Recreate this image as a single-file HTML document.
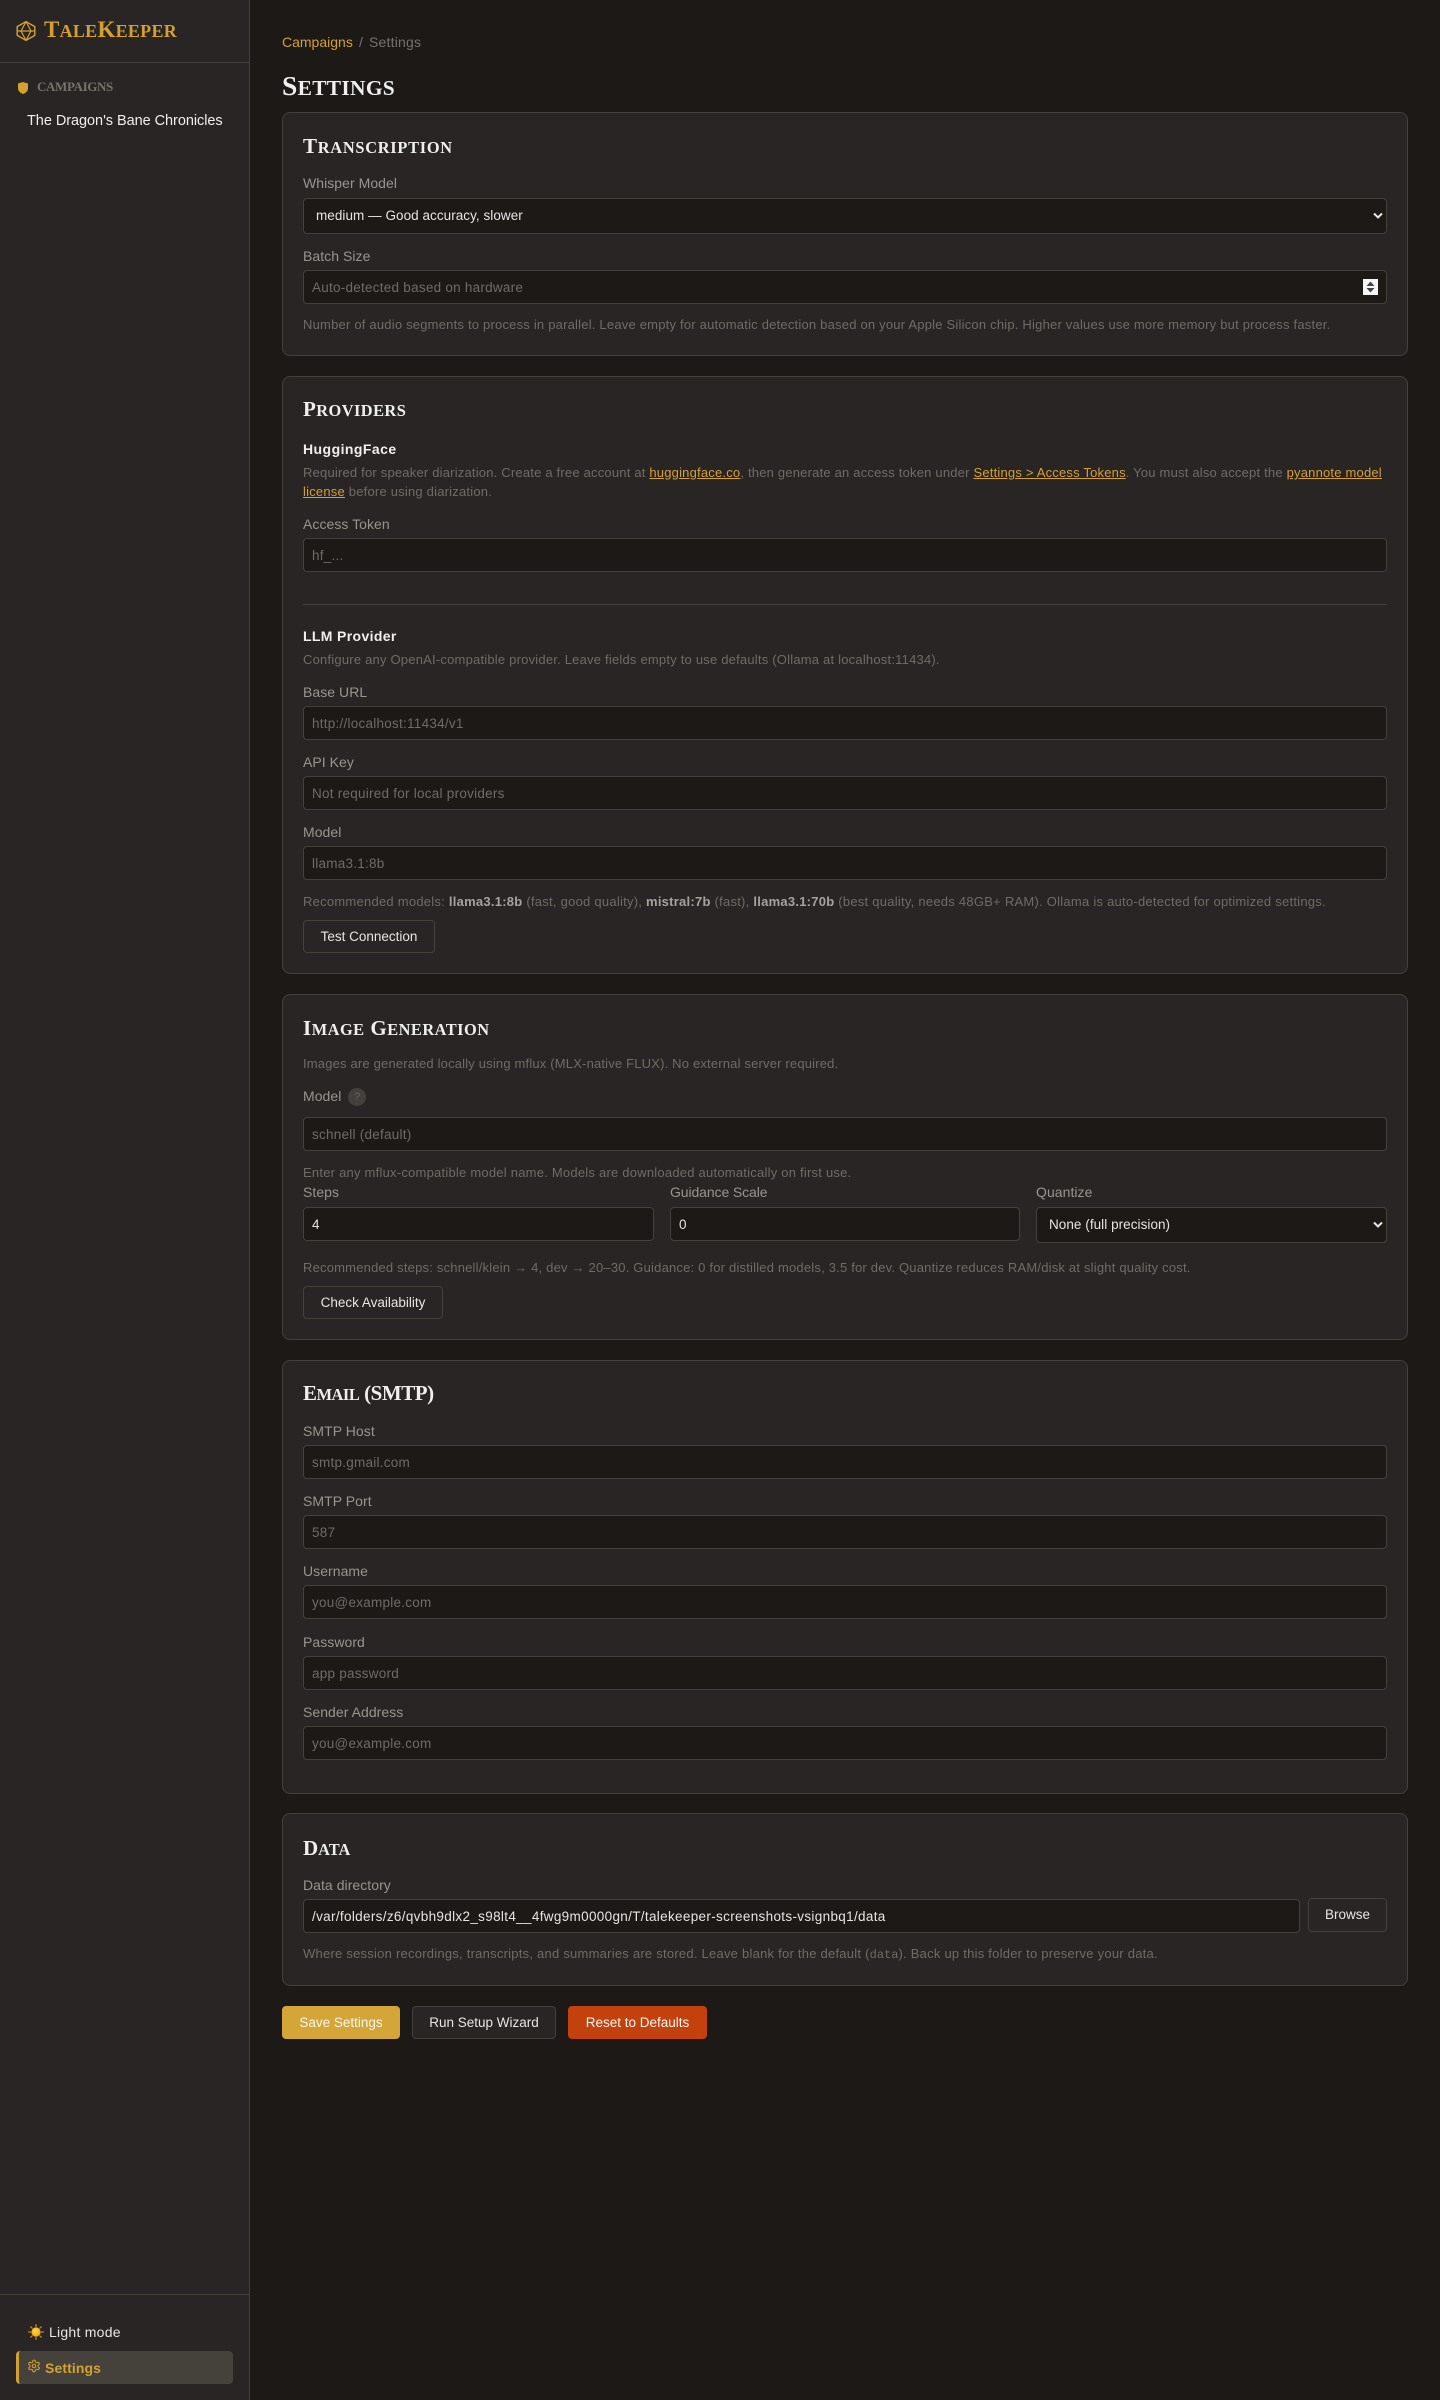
<!DOCTYPE html>
<html lang="en"><head><meta charset="utf-8"><title>TaleKeeper Settings</title>
<style>
*{box-sizing:border-box}
html,body{margin:0;padding:0;background:#1c1917}
body{width:1440px;height:2400px;position:relative;overflow:hidden;font-family:"Liberation Sans",sans-serif;color:#e7e5e4}
.a{position:absolute}
.t{position:absolute;white-space:nowrap;line-height:20px;height:20px}
.side{left:0;top:0;width:250px;height:2400px;background:#292524;border-right:1px solid #44403c}
.card{position:absolute;left:282px;width:1126px;background:#292524;border:1px solid #44403c;border-radius:8px}
.sc{font-family:"Liberation Serif",serif;font-weight:700;line-height:30px;height:30px}
.sc span{font-size:.78em;text-transform:uppercase}
.h{left:303px;font-size:21px;letter-spacing:.73px;color:#f0efee;top:0}
.l{left:303px;font-size:14px;letter-spacing:.05px;color:#9a948e}
.n{left:303px;font-size:13px;letter-spacing:.21px;color:#716b66}
.b{left:303px;font-size:14px;font-weight:700;letter-spacing:.35px;color:#f0efee}
.i{position:absolute;left:303px;width:1084px;height:34px;background:#1c1917;border:1px solid #44403c;border-radius:4px;font-size:13.5px;letter-spacing:.25px;line-height:33px;padding-left:8px;color:#716b66;white-space:nowrap;overflow:hidden}
.v{color:#e7e5e4}
.s{padding-left:12px;height:36px;line-height:34px;font-size:13.5px;letter-spacing:.05px;color:#e7e5e4}
.btn{position:absolute;height:33px;border:1px solid #44403c;border-radius:4px;background:#292524;color:#e7e5e4;font-size:13.5px;line-height:31px;text-align:center;white-space:nowrap;letter-spacing:0}
a{color:#d4a030;text-decoration:underline}
.n b{color:#a8a29e}
code{font-family:"Liberation Mono",monospace;font-size:12px;letter-spacing:0}
svg{position:absolute;display:block}
</style></head><body>

<div class="a side"></div>
<div class="a" style="left:0;top:62px;width:249px;height:1px;background:#44403c"></div>
<div class="a" style="left:0;top:2294px;width:249px;height:1px;background:#44403c"></div>

<svg style="left:15px;top:20px" width="22" height="22" viewBox="0 0 20 20" fill="none" stroke="#d4a030" stroke-width="1.3" stroke-linejoin="round"><path d="M10 1.500 18 6v8l-8 4.500L2 14V6z"/><path d="M10 1.500 14.500 10 10 18.500 5.500 10z" stroke-width="1.100"/><path d="M2 10h16" stroke-width="1.100"/></svg>
<div class="t sc" style="left:44px;top:15px;font-size:23px;letter-spacing:.3px;color:#d4a030">T<span>ale</span>K<span>eeper</span></div>

<svg style="left:18px;top:82px" width="10" height="12" viewBox="0 0 10 12"><path d="M5 0 10 1.500V6c0 3-2.200 5-5 6C2.200 11 0 9 0 6V1.500z" fill="#d4a030"/></svg>
<div class="t sc" style="left:37px;top:72px;font-size:15px;letter-spacing:-.4px;color:#78716c"><span style="font-size:.87em">campaigns</span></div>
<div class="t" style="left:27px;top:111px;font-size:14.500px;letter-spacing:-.05px;color:#f0efee">The Dragon's Bane Chronicles</div>

<svg style="left:28px;top:2324px" width="16" height="16" viewBox="0 0 16 16"><defs><radialGradient id="g" cx=".45" cy=".4" r=".7"><stop offset="0" stop-color="#ffd83a"/><stop offset="1" stop-color="#f59a0b"/></radialGradient></defs><g stroke="#b8862a" stroke-width="1.300" stroke-linecap="round"><path d="M8 .6v2M8 13.400v2M.6 8h2M13.400 8h2M2.800 2.800l1.300 1.300M11.900 11.900l1.300 1.300M2.800 13.200l1.300-1.300M11.900 4.100l1.300-1.300"/></g><circle cx="8" cy="8" r="4.600" fill="url(#g)"/></svg>
<div class="t" style="left:49px;top:2322px;font-size:14px;letter-spacing:.25px;color:#e7e5e4">Light mode</div>
<div class="a" style="left:16px;top:2351px;width:217px;height:33px;background:#45423c;border-left:3px solid #d4a030;border-radius:4px"></div>
<svg style="left:27px;top:2359px" width="14" height="14" viewBox="0 0 24 24" fill="none" stroke="#d4a030" stroke-width="1.800" stroke-linecap="round" stroke-linejoin="round"><path d="M12.220 2h-.44a2 2 0 0 0-2 2v.18a2 2 0 0 1-1 1.730l-.43.25a2 2 0 0 1-2 0l-.15-.08a2 2 0 0 0-2.730.73l-.22.38a2 2 0 0 0 .73 2.730l.15.1a2 2 0 0 1 1 1.720v.51a2 2 0 0 1-1 1.740l-.15.09a2 2 0 0 0-.73 2.730l.22.38a2 2 0 0 0 2.730.73l.15-.08a2 2 0 0 1 2 0l.43.25a2 2 0 0 1 1 1.730V20a2 2 0 0 0 2 2h.44a2 2 0 0 0 2-2v-.18a2 2 0 0 1 1-1.730l.43-.25a2 2 0 0 1 2 0l.15.08a2 2 0 0 0 2.730-.73l.22-.39a2 2 0 0 0-.73-2.730l-.15-.08a2 2 0 0 1-1-1.740v-.5a2 2 0 0 1 1-1.740l.15-.09a2 2 0 0 0 .73-2.730l-.22-.38a2 2 0 0 0-2.730-.73l-.15.08a2 2 0 0 1-2 0l-.43-.25a2 2 0 0 1-1-1.730V4a2 2 0 0 0-2-2z"/><circle cx="12" cy="12" r="3"/></svg>
<div class="t" style="left:45px;top:2358px;font-size:14px;font-weight:700;letter-spacing:.1px;color:#d4a030">Settings</div>

<div class="t" style="left:282px;top:32px;font-size:14px;letter-spacing:0;color:#d4a030">Campaigns</div>
<div class="t" style="left:359px;top:32px;font-size:14px;color:#78716c">/</div>
<div class="t" style="left:369px;top:32px;font-size:14px;letter-spacing:.2px;color:#78716c">Settings</div>
<div class="t sc" style="left:282px;top:71px;font-size:27.500px;letter-spacing:.3px;color:#f0efee">S<span>ettings</span></div>

<div class="card" style="top:112px;height:244px"></div>
<div class="card" style="top:376px;height:598px"></div>
<div class="card" style="top:994px;height:346px"></div>
<div class="card" style="top:1360px;height:434px"></div>
<div class="card" style="top:1813px;height:173px"></div>

<div class="t sc h" style="top:131px">T<span>ranscription</span></div>
<div class="t l" style="top:173px">Whisper Model</div>
<div class="i s" style="top:198px">medium — Good accuracy, slower</div>
<svg style="left:1373px;top:212px" width="10" height="8" viewBox="0 0 10 8" fill="none" stroke="#e7e5e4" stroke-width="2"><path d="M1 1.500l4 4 4-4"/></svg>
<div class="t l" style="top:246px">Batch Size</div>
<div class="i" style="top:270px">Auto-detected based on hardware</div>
<svg style="left:1363px;top:279px" width="15" height="16" viewBox="0 0 15 16"><rect width="15" height="16" fill="#f5f5f5"/><path d="M7.500 2.500 11.500 7h-8zM7.500 13.500 3.500 9h8z" fill="#444"/></svg>
<div class="t n" style="top:315px">Number of audio segments to process in parallel. Leave empty for automatic detection based on your Apple Silicon chip. Higher values use more memory but process faster.</div>

<div class="t sc h" style="top:394px;letter-spacing:.45px">P<span>roviders</span></div>
<div class="t b" style="top:439px;letter-spacing:.45px">HuggingFace</div>
<div class="t n" style="top:463px;letter-spacing:.2px">Required for speaker diarization. Create a free account at <a>huggingface.co</a>, then generate an access token under <a>Settings &gt; Access Tokens</a>. You must also accept the <a>pyannote model</a></div>
<div class="t n" style="top:482px"><a>license</a> before using diarization.</div>
<div class="t l" style="top:514px">Access Token</div>
<div class="i" style="top:538px">hf_...</div>
<div class="a" style="left:303px;top:604px;width:1084px;height:1px;background:#44403c"></div>
<div class="t b" style="top:626px">LLM Provider</div>
<div class="t n" style="top:650px">Configure any OpenAI-compatible provider. Leave fields empty to use defaults (Ollama at localhost:11434).</div>
<div class="t l" style="top:682px">Base URL</div>
<div class="i" style="top:706px">http://localhost:11434/v1</div>
<div class="t l" style="top:752px">API Key</div>
<div class="i" style="top:776px">Not required for local providers</div>
<div class="t l" style="top:822px">Model</div>
<div class="i" style="top:846px">llama3.1:8b</div>
<div class="t n" style="top:892px;letter-spacing:.25px">Recommended models: <b>llama3.1:8b</b> (fast, good quality), <b>mistral:7b</b> (fast), <b>llama3.1:70b</b> (best quality, needs 48GB+ RAM). Ollama is auto-detected for optimized settings.</div>
<div class="btn" style="left:303px;top:920px;width:132px">Test Connection</div>

<div class="t sc h" style="top:1013px;letter-spacing:.5px">I<span>mage</span> G<span>eneration</span></div>
<div class="t n" style="top:1054px;letter-spacing:.18px">Images are generated locally using mflux (MLX-native FLUX). No external server required.</div>
<div class="t l" style="top:1086px">Model</div>
<div class="a" style="left:348px;top:1088px;width:18px;height:18px;border-radius:50%;background:#44403c;color:#6b6560;font-size:11px;line-height:18px;text-align:center">?</div>
<div class="i" style="top:1117px">schnell (default)</div>
<div class="t n" style="top:1163px;letter-spacing:.23px">Enter any mflux-compatible model name. Models are downloaded automatically on first use.</div>
<div class="t l" style="top:1182px">Steps</div>
<div class="t l" style="top:1182px;left:670px;letter-spacing:-.1px">Guidance Scale</div>
<div class="t l" style="top:1182px;left:1036px">Quantize</div>
<div class="i v" style="top:1207px;width:351px">4</div>
<div class="i v" style="top:1207px;left:670px;width:350px">0</div>
<div class="i s" style="top:1207px;left:1036px;width:351px">None (full precision)</div>
<svg style="left:1373px;top:1221px" width="10" height="8" viewBox="0 0 10 8" fill="none" stroke="#e7e5e4" stroke-width="2"><path d="M1 1.500l4 4 4-4"/></svg>
<div class="t n" style="top:1258px;letter-spacing:.2px">Recommended steps: schnell/klein → 4, dev → 20–30. Guidance: 0 for distilled models, 3.5 for dev. Quantize reduces RAM/disk at slight quality cost.</div>
<div class="btn" style="left:303px;top:1286px;width:140px">Check Availability</div>

<div class="t sc h" style="top:1378px;letter-spacing:-.45px">E<span>mail</span> (SMTP)</div>
<div class="t l" style="top:1421px">SMTP Host</div>
<div class="i" style="top:1445px">smtp.gmail.com</div>
<div class="t l" style="top:1491px">SMTP Port</div>
<div class="i" style="top:1515px">587</div>
<div class="t l" style="top:1561px">Username</div>
<div class="i" style="top:1585px">you@example.com</div>
<div class="t l" style="top:1632px">Password</div>
<div class="i" style="top:1656px">app password</div>
<div class="t l" style="top:1702px">Sender Address</div>
<div class="i" style="top:1726px">you@example.com</div>

<div class="t sc h" style="top:1833px;letter-spacing:0">D<span>ata</span></div>
<div class="t l" style="top:1875px">Data directory</div>
<div class="i v" style="top:1899px;width:997px;letter-spacing:.33px">/var/folders/z6/qvbh9dlx2_s98lt4__4fwg9m0000gn/T/talekeeper-screenshots-vsignbq1/data</div>
<div class="btn" style="left:1308px;top:1898px;width:79px;height:34px;line-height:32px">Browse</div>
<div class="t n" style="top:1944px;letter-spacing:.24px">Where session recordings, transcripts, and summaries are stored. Leave blank for the default (<code>data</code>). Back up this folder to preserve your data.</div>

<div class="btn" style="left:282px;top:2006px;width:118px;background:#d4a537;border-color:#d4a537;color:#f5f5f4">Save Settings</div>
<div class="btn" style="left:412px;top:2006px;width:144px">Run Setup Wizard</div>
<div class="btn" style="left:568px;top:2006px;width:139px;background:#c2410c;border-color:#c2410c;color:#f5f5f4">Reset to Defaults</div>

</body></html>
